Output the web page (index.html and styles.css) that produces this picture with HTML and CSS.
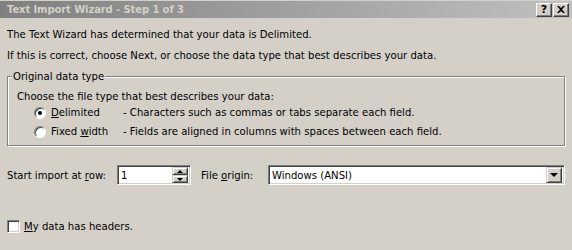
FILE: index.html
```html
<!DOCTYPE html>
<html lang="en">
<head>
  <meta charset="UTF-8" />
  <title>Text Import Wizard</title>
  <link rel="stylesheet" href="styles.css">
</head>
<body>
  <div class="window">
    <div class="titlebar">
      <span class="title">Text Import Wizard - Step 1 of 3</span>
      <div class="caption-buttons">
        <button class="cap-btn help">?</button>
        <button class="cap-btn close">
          <svg width="8" height="7" viewBox="0 0 8 7"><path d="M0 0h2l2 2 2-2h2L5 3.5 8 7H6L4 5 2 7H0l3-3.5z" fill="#000"/></svg>
        </button>
      </div>
    </div>

    <div class="content">
      <p class="intro first">The Text Wizard has determined that your data is Delimited.</p>
      <p class="intro">If this is correct, choose Next, or choose the data type that best describes your data.</p>

      <!-- Original data type -->
      <div class="group">
        <span class="legend">Original data type</span>
        <p class="group-label">Choose the file type that best describes your data:</p>
        <div class="option">
          <span class="radio checked"></span>
          <span class="opt-name"><u>D</u>elimited</span>
          <span class="opt-desc">- Characters such as commas or tabs separate each field.</span>
        </div>
        <div class="option">
          <span class="radio"></span>
          <span class="opt-name">Fixed <u>w</u>idth</span>
          <span class="opt-desc">- Fields are aligned in columns with spaces between each field.</span>
        </div>
      </div>

      <div class="import-row">
        <span class="field-label">Start import at <u>r</u>ow:</span>
        <div class="spinner sunken">
          <span class="spin-value">1</span>
          <div class="spin-buttons">
            <span class="spin-btn"><span class="arrow up"></span></span>
            <span class="spin-btn"><span class="arrow down"></span></span>
          </div>
        </div>
        <span class="field-label origin">File <u>o</u>rigin:</span>
        <div class="combo sunken">
          <span class="combo-value">Windows (ANSI)</span>
          <span class="combo-btn"><span class="arrow down"></span></span>
        </div>
      </div>

      <div class="headers-row">
        <span class="checkbox"></span>
        <span><u>M</u>y data has headers.</span>
      </div>
    </div>
  </div>
</body>
</html>
```

FILE: styles.css
```css
body {
  margin: 0;
  background: #d4d0c8;
  font-family: "DejaVu Sans", sans-serif;
  font-size: 10.1px;
  color: #000;
}
.window {
  width: 572px;
  height: 250px;
  padding-top: 1px;
  box-sizing: border-box;
}
.titlebar {
  height: 17px;
  background: linear-gradient(to right, #808080, #c0c0c0);
  display: flex;
  align-items: center;
  justify-content: space-between;
  padding: 0 3px 0 7px;
}
.title {
  color: #d4d0c8;
  font-weight: bold;
  font-size: 10px;
  letter-spacing: -0.1px;
}
.caption-buttons {
  display: flex;
  gap: 1px;
}
.cap-btn {
  width: 16px;
  height: 14px;
  padding: 0;
  background: #d4d0c8;
  border: 1px solid;
  border-color: #fff #404040 #404040 #fff;
  box-shadow: inset -1px -1px 0 #808080;
  display: flex;
  align-items: center;
  justify-content: center;
  font-family: "DejaVu Sans", sans-serif;
  font-weight: bold;
  font-size: 11px;
  line-height: 12px;
}
.content {
  padding: 0 7px;
}
.intro {
  margin: 8px 0 0;
  line-height: 13px;
}
.intro.first {
  margin-top: 10px;
}
.group {
  position: relative;
  box-sizing: border-box;
  margin-top: 14px;
  padding: 13px 9px 0;
  height: 70px;
  border: 1px solid #808080;
  box-shadow: 1px 1px 0 #fff, inset 1px 1px 0 #fff;
}
.legend {
  position: absolute;
  top: -7px;
  left: 4px;
  padding: 0 1px;
  line-height: 13px;
  background: #d4d0c8;
}
.group-label {
  margin: 0;
  line-height: 13px;
}
.option {
  display: flex;
  align-items: center;
  height: 19px;
}
.radio {
  width: 10px;
  height: 10px;
  margin-left: 17px;
  border: 1px solid;
  border-color: #808080 #fff #fff #808080;
  border-radius: 50%;
  background: #fff;
  box-shadow: inset 1px 1px 0 #404040;
  position: relative;
}
.radio.checked::after {
  content: "";
  position: absolute;
  left: 3px;
  top: 3px;
  width: 4px;
  height: 4px;
  border-radius: 50%;
  background: #000;
}
.opt-name {
  margin-left: 5px;
  width: 72px;
}
.import-row {
  display: flex;
  align-items: center;
  margin-top: 19px;
  height: 20px;
}
.field-label {
  width: 110px;
}
.field-label.origin {
  width: 67px;
  margin-left: 10px;
}
.sunken {
  border: 1px solid;
  border-color: #808080 #fff #fff #808080;
  box-shadow: inset 1px 1px 0 #404040, inset -1px -1px 0 #d4d0c8;
  background: #fff;
  box-sizing: border-box;
  display: flex;
  align-items: center;
  padding: 2px;
}
.spinner {
  width: 74px;
  height: 20px;
}
.spin-value {
  flex: 1;
  padding-left: 1px;
}
.spin-buttons {
  display: flex;
  flex-direction: column;
  width: 16px;
  height: 16px;
}
.spin-btn,
.combo-btn {
  flex: 1;
  background: #d4d0c8;
  border: 1px solid;
  border-color: #d4d0c8 #404040 #404040 #d4d0c8;
  box-shadow: inset 1px 1px 0 #fff, inset -1px -1px 0 #808080;
  display: flex;
  align-items: center;
  justify-content: center;
}
.arrow {
  width: 0;
  height: 0;
  border-left: 3px solid transparent;
  border-right: 3px solid transparent;
}
.arrow.up {
  border-bottom: 3px solid #000;
}
.arrow.down {
  border-top: 3px solid #000;
}
.combo {
  width: 297px;
  height: 20px;
}
.combo-value {
  flex: 1;
  padding-left: 1px;
}
.combo-btn {
  flex: none;
  width: 16px;
  height: 16px;
  box-sizing: border-box;
}
.combo-btn .arrow {
  border-left-width: 4px;
  border-right-width: 4px;
  border-top-width: 4px;
}
.headers-row {
  display: flex;
  align-items: center;
  margin-top: 35px;
  gap: 4px;
}
.checkbox {
  width: 11px;
  height: 11px;
  border: 1px solid;
  border-color: #808080 #fff #fff #808080;
  box-shadow: inset 1px 1px 0 #404040, inset -1px -1px 0 #d4d0c8;
  background: #fff;
}
```
